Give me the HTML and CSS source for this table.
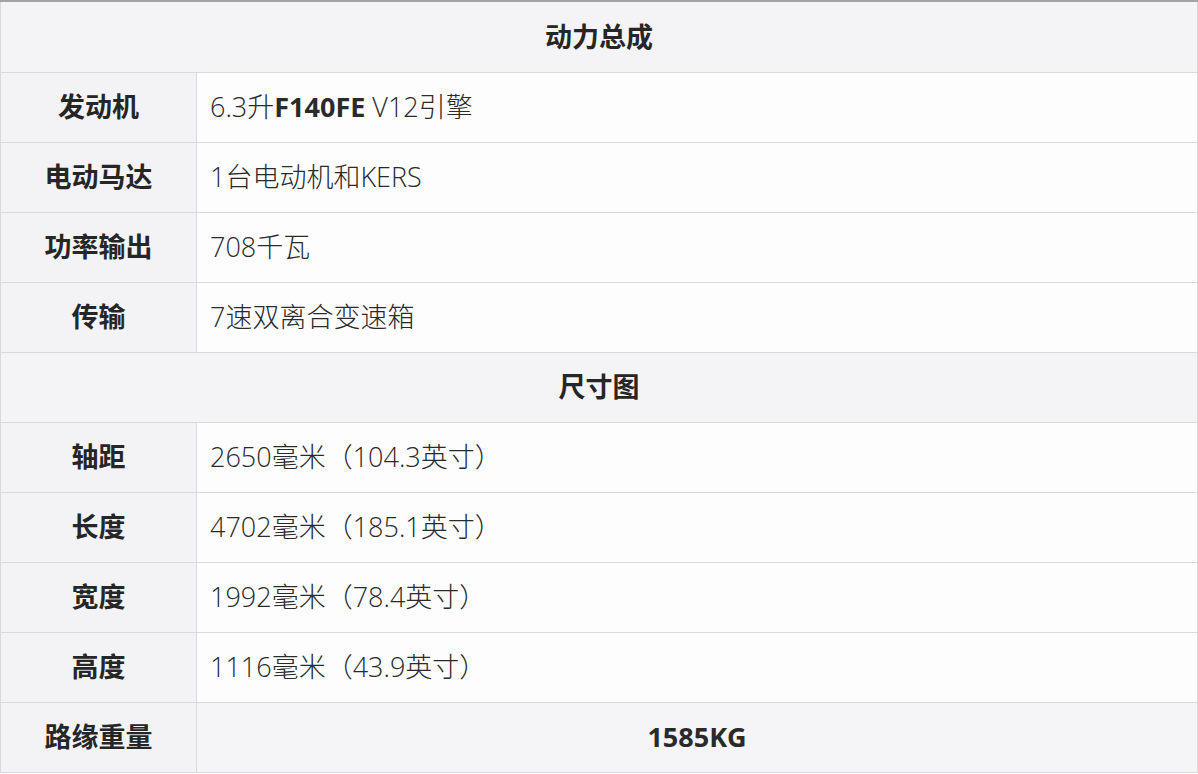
FILE: index.html
```html
<!DOCTYPE html>
<html lang="zh-CN">
<head>
<meta charset="utf-8">
<link rel="stylesheet" href="styles.css">
</head>
<body>
<table class="spec">
  <tr class="sec first"><th colspan="2">动力总成</th></tr>
  <tr><th class="lbl">发动机</th><td class="val">6.3升<b>F140FE</b> V12引擎</td></tr>
  <tr><th class="lbl">电动马达</th><td class="val">1台电动机和KERS</td></tr>
  <tr><th class="lbl">功率输出</th><td class="val">708千瓦</td></tr>
  <tr><th class="lbl">传输</th><td class="val">7速双离合变速箱</td></tr>
  <tr class="sec"><th colspan="2">尺寸图</th></tr>
  <tr><th class="lbl">轴距</th><td class="val">2650毫米（104.3英寸）</td></tr>
  <tr><th class="lbl">长度</th><td class="val">4702毫米（185.1英寸）</td></tr>
  <tr><th class="lbl">宽度</th><td class="val">1992毫米（78.4英寸）</td></tr>
  <tr><th class="lbl">高度</th><td class="val">1116毫米（43.9英寸）</td></tr>
  <tr><th class="lbl">路缘重量</th><td class="val total">1585KG</td></tr>
</table>
</body>
</html>
```
FILE: styles.css
```css
html, body {
  margin: 0;
  padding: 0;
  background: #ffffff;
}
body {
  font-family: "Open Sans", "Noto Sans CJK SC", sans-serif;
  color: #262626;
}
.spec {
  width: 1198px;
  border-collapse: collapse;
  border-top: 2px solid #a3a3a3;
}
.spec th, .spec td {
  box-sizing: border-box;
  height: 70px;
  padding: 0;
  border: 1px solid #d9d9d9;
  font-size: 27px;
  line-height: 20px;
}
.spec .first th {
  border-top: none;
  height: 71px;
}
.sec th {
  background: #f4f4f6;
  font-weight: 700;
  text-align: center;
}
.lbl {
  width: 196px;
  background: #f3f3f5;
  font-weight: 700;
  text-align: center;
  border-left-color: #e6e6e6;
}
.val {
  background: #fdfdfe;
  font-weight: 300;
  text-align: left;
  padding-left: 13px !important;
  color: #2a2a2a;
}
.val b {
  font-weight: 700;
}
.val.total {
  background: #f5f5f7;
  text-align: center;
  font-weight: 700;
  padding-left: 0 !important;
}
```
